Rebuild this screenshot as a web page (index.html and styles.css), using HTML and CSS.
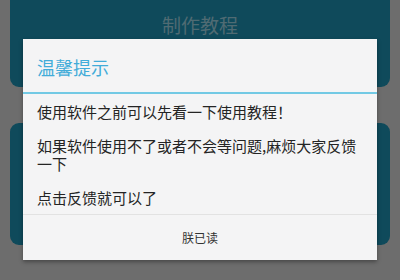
FILE: index.html
```html
<!DOCTYPE html>
<html lang="zh-CN">
<head>
<meta charset="utf-8">
<link rel="stylesheet" href="styles.css">
</head>
<body>
<div class="screen">
  <div class="card card-top"><span class="card-label">制作教程</span></div>
  <div class="card card-bottom"></div>
</div>
<div class="dialog">
  <div class="dialog-title">温馨提示</div>
  <div class="dialog-body">
    <p>使用软件之前可以先看一下使用教程！</p>
    <p>如果软件使用不了或者不会等问题,麻烦大家反馈一下</p>
    <p>点击反馈就可以了</p>
  </div>
  <div class="dialog-actions"><span class="dialog-btn">朕已读</span></div>
</div>
</body>
</html>
```
FILE: styles.css
```css
html, body {
  margin: 0;
  padding: 0;
  width: 400px;
  height: 280px;
  overflow: hidden;
  background: #6d6d6d;
  font-family: "Noto Sans CJK SC", "Noto Sans", sans-serif;
}
.screen {
  display: flex;
  flex-direction: column;
  gap: 36px;
  padding: 0 10px;
}
.card {
  background: #0f4a5b;
}
.card-top {
  height: 87px;
  border-radius: 0 0 9px 9px;
  display: flex;
  justify-content: center;
  padding-top: 14px;
  box-sizing: border-box;
}
.card-label {
  color: #4f6b73;
  font-size: 19px;
  line-height: 22px;
}
.card-bottom {
  height: 122px;
  border-radius: 9px;
}
.dialog {
  position: absolute;
  left: 23px;
  top: 39px;
  width: 354px;
  background: #f4f4f5;
  box-shadow: 0 2px 4px rgba(0,0,0,0.35);
}
.dialog-title {
  height: 55px;
  box-sizing: border-box;
  padding: 17px 14px 0;
  font-size: 18px;
  line-height: 22px;
  color: #42acd9;
  border-bottom: 2px solid #72c9e4;
}
.dialog-body {
  padding: 9px 14px 7px;
  display: flex;
  flex-direction: column;
  gap: 16px;
  border-bottom: 1px solid #e2e2e2;
}
.dialog-body p {
  margin: 0;
  font-size: 15px;
  line-height: 18px;
  color: #242424;
}
.dialog-actions {
  height: 45px;
  display: flex;
  align-items: center;
  justify-content: center;
}
.dialog-btn {
  font-size: 12px;
  color: #333;
}
```
